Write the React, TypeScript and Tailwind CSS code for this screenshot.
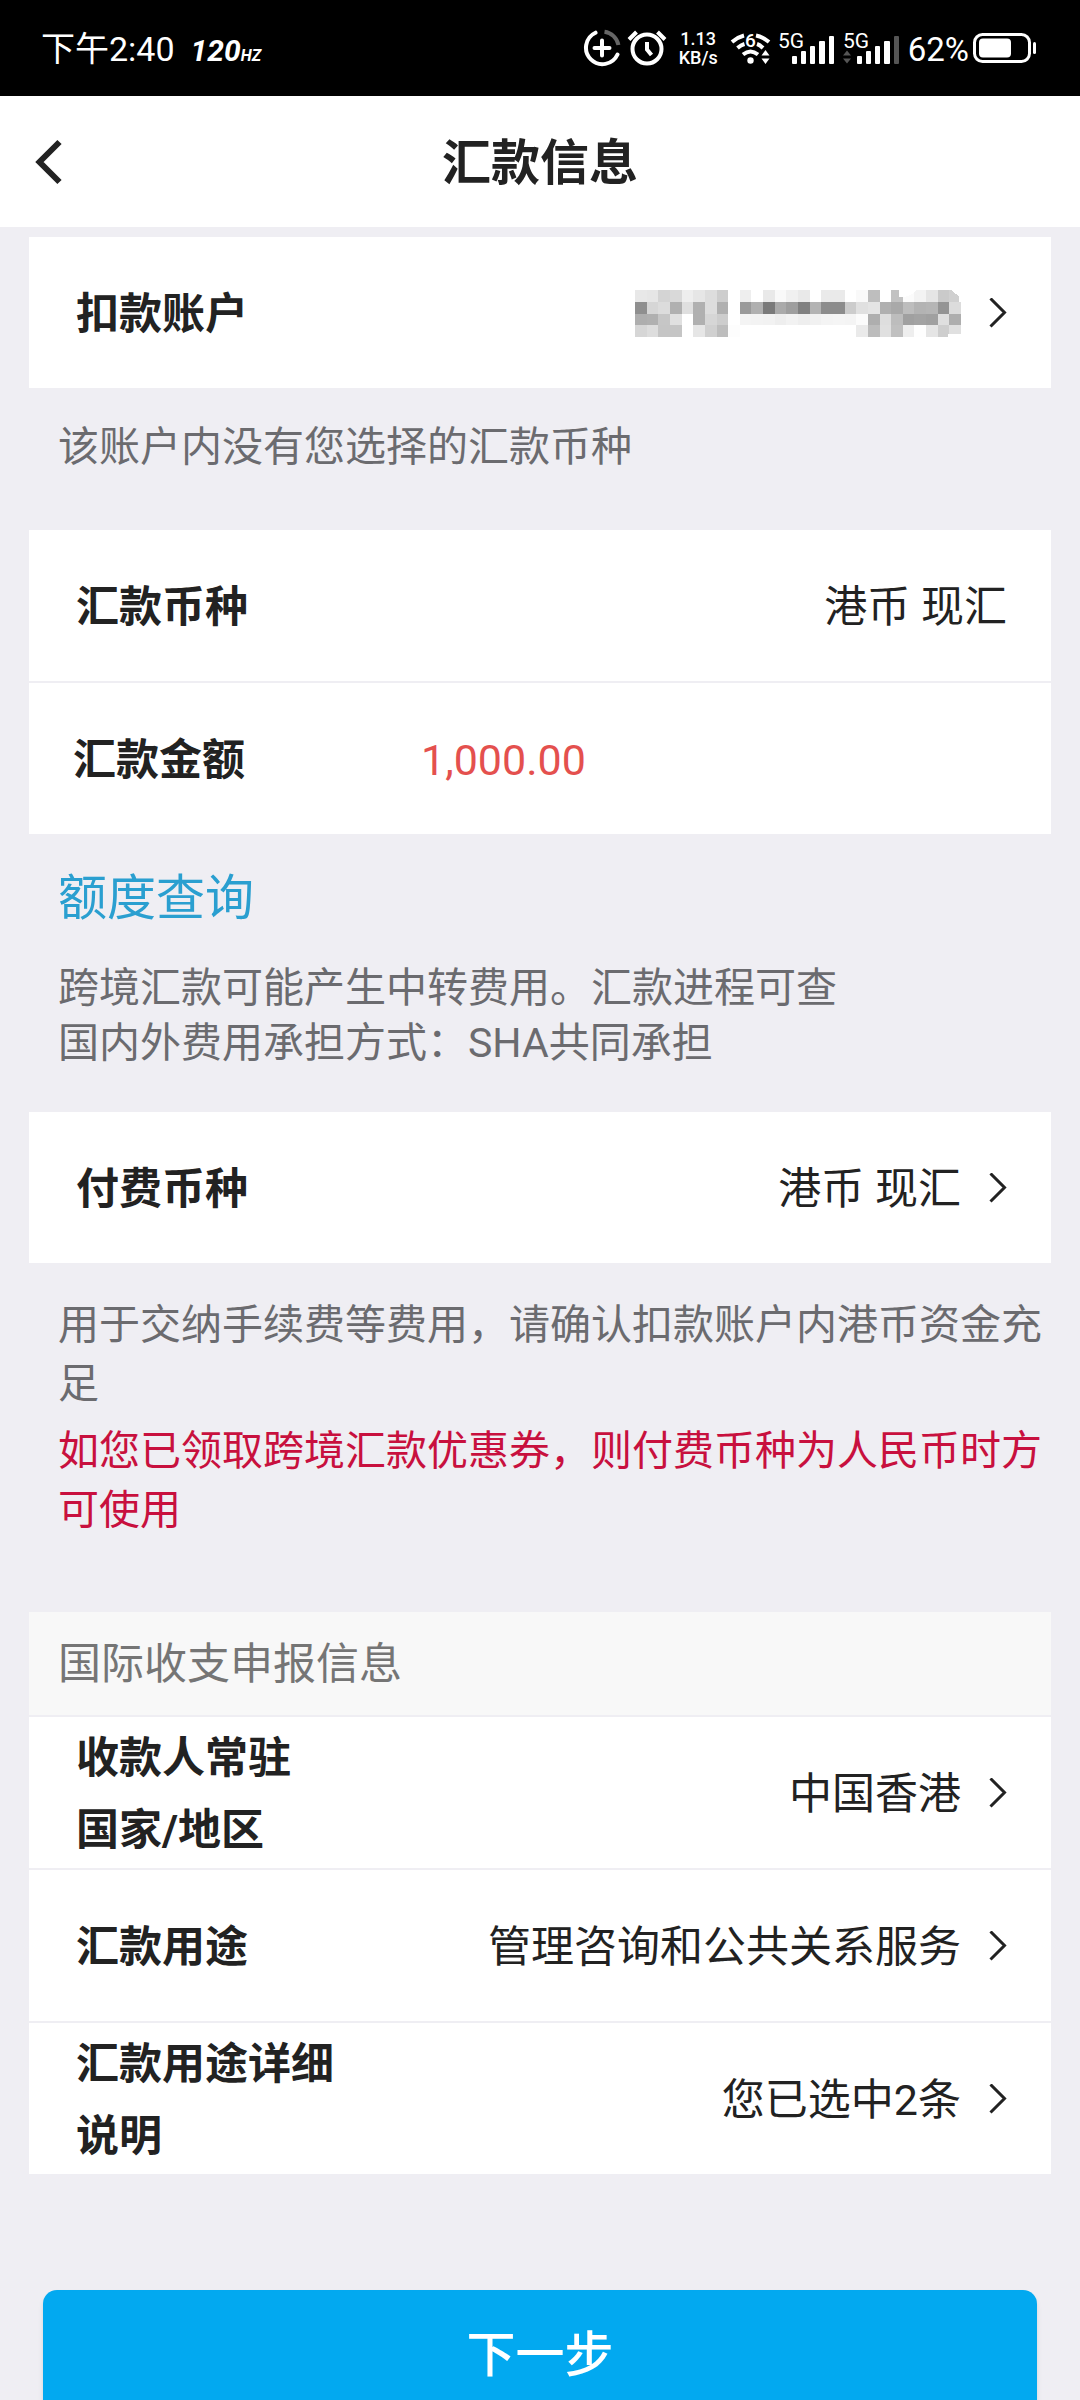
import React from "react";

type IRow = {
  label: string;
  value?: React.ReactNode;
  arrow?: boolean;
};

// grey levels of the masked account number, one line per pixel row
const MASK = [
  "e8 e6 d4 d9 ee e6 dd cd ff ee ff e9 f9 f0 e9 ff ea ea ff f9 be ff c2 fb f3 e5 ca d0",
  "8f d6 dc b0 df b0 dd b0 ff 9a b0 7a aa 9e 80 b3 8c 8c cc e0 e4 b0 a9 bd b3 b5 94 dc",
  "ae b0 c6 e0 ff b0 d6 cd ff f4 f3 f2 ee f2 ee f1 f4 f5 f4 fb ae de bd a0 a3 a0 df ae",
  "d6 dd c5 c5 ff e6 d0 bd fd ff ff ff ff ff ff ff ff ff ff ea bc e0 c0 ee fe e5 ce e0",
];

const MaskedAccount = () => (
  <svg width="326" height="47" viewBox="0 0 28 4" preserveAspectRatio="none" shapeRendering="crispEdges" role="img" aria-label="账户">
    {MASK.map((line, y) =>
      line.split(" ").map((c, x) => (
        <rect key={`${x}-${y}`} x={x} y={y} width="1" height="1" fill={`#${c}${c}${c}`} />
      ))
    )}
    <path d="M27.2 0H28V1H27.85V.6zM22.7 0H24.2L23.8 .35L23.2 .6L22.7 .6zM26.9 3.75H28V4H26.9z" fill="#fff" />
  </svg>
);

const Arrow = () => (
  <svg width="18" height="32" viewBox="0 0 18 32" fill="none" stroke="#222" strokeWidth="3" className="shrink-0">
    <path d="M1.5 0.500L15.5 14.500L1.5 28.500" />
  </svg>
);

const Signal = ({ weak }: { weak?: boolean }) => (
  <svg width="57" height="36" viewBox="0 0 57 36" fill="#fff">
    <text x="0" y="18" fontSize="21" fontFamily="Roboto, sans-serif">5G</text>
    {weak && <path d="M0 25.500L4 20.500L8 25.500zM0 28.500L4 33.500L8 28.500z" fill="#555" />}
    <rect x="14" y="26" width="5" height="8" rx="1" />
    <rect x="23" y="21" width="5" height="13" rx="1" />
    <rect x="32" y="16" width="5" height="18" rx="1" />
    <rect x="41" y="11" width="6" height="23" rx="1" />
    <rect x="51" y="6" width="5" height="28" rx="1" fill={weak ? "#555" : "#fff"} />
  </svg>
);

const StatusBar = () => (
  <div className="flex h-[96px] shrink-0 items-center justify-between bg-black pr-[43px] pl-[41px] text-white">
    <div className="flex items-baseline gap-4 pt-2">
      <span className="text-[34px] leading-[48px]">下午2:40</span>
      <span className="text-[30px] leading-[48px] font-bold italic">
        120<span className="text-[16px]">HZ</span>
      </span>
    </div>
    <div className="flex items-center">
      <svg width="38" height="38" viewBox="0 0 38 38" fill="none" stroke="#fff" strokeWidth="4" strokeLinecap="round">
        <path d="M12.500 3.700A16.500 16.500 0 1 0 34.500 25.500" />
        <path d="M21.500 2.700A16.500 16.500 0 0 1 35.400 16" stroke="#666" strokeLinecap="butt" />
        <path d="M19 11.500V26.500M11.500 19H26.500" />
      </svg>
      <svg width="40" height="38" viewBox="0 0 40 38" fill="none" stroke="#fff" strokeWidth="4" className="ml-[6px]">
        <circle cx="20" cy="20" r="14.500" />
        <path d="M2 10.500L9.500 3M38 10.500L30.500 3M20 13V20.500L24.500 26" />
      </svg>
      <div className="ml-3 flex flex-col text-center text-[18px] leading-[19px] font-medium">
        <span>1.13</span>
        <span>KB/s</span>
      </div>
      <svg width="42" height="36" viewBox="0 0 42 36" fill="none" stroke="#fff" strokeWidth="4" className="ml-3">
        <path d="M2 12Q8 7 14 5.500M26 5.500Q33 7 39 12M7.500 18Q11 15 14.500 14M27 14Q30 15 33 18M13 24.500Q20.500 18.500 28 24.500" />
        <circle cx="20.500" cy="30.500" r="3.200" fill="#fff" stroke="none" />
        <text x="15" y="17" fontSize="19" fill="#fff" stroke="none" fontFamily="Roboto, sans-serif" fontWeight="500">6</text>
        <path d="M31.500 25.500L35.500 20L39.500 25.500zM31.500 28.500L35.500 34L39.500 28.500z" fill="#fff" stroke="none" />
      </svg>
      <div className="ml-[6px] flex gap-2">
        <Signal />
        <Signal weak />
      </div>
      <span className="ml-2 pt-1 text-[33px] leading-[40px]">62%</span>
      <svg width="64" height="30" viewBox="0 0 64 30" fill="none" className="ml-1">
        <rect x="1.500" y="1.500" width="55" height="27" rx="8" stroke="#fff" strokeWidth="3" />
        <rect x="6" y="5.500" width="32" height="19" rx="4" fill="#fff" />
        <rect x="60" y="9" width="3" height="12" rx="1.500" fill="#fff" />
      </svg>
    </div>
  </div>
);

const Row: React.FC<IRow> = ({ label, value, arrow }) => {
  const content = (
    <>
      <span className="w-[270px] shrink-0 font-bold whitespace-pre-line">{label}</span>
      <span className="flex items-center gap-7">
        {value}
        {arrow && <Arrow />}
      </span>
    </>
  );
  const style = "flex min-h-[151px] w-full items-center justify-between bg-white pt-[2px] pr-11 pl-[47px] text-left text-[43px] leading-[72px]";

  if (arrow) return <button type="button" className={style}>{content}</button>;
  return <div className={style}>{content}</div>;
};

export default function App() {
  return (
    <div className="flex h-screen flex-col bg-[#efeef3] font-[Roboto,'Noto_Sans_CJK_SC',sans-serif] text-[#222]">
      <StatusBar />

      <header className="grid min-h-[131px] shrink-0 grid-cols-[1fr_auto_1fr] items-center bg-white px-[35px]">
        <button type="button" aria-label="返回" className="w-7">
          <svg width="28" height="46" viewBox="0 0 28 46" fill="none" stroke="#222" strokeWidth="6">
            <path d="M24.500 3L4.500 23L24.500 43" />
          </svg>
        </button>
        <h1 className="pt-1 text-[49px] leading-[72px] font-bold">汇款信息</h1>
      </header>

      <main className="flex-1 overflow-y-auto px-[29px] pt-[10px] [scrollbar-width:none]">
        <Row label="扣款账户" value={<MaskedAccount />} arrow />
        <p className="mt-[30px] pl-[29px] text-[41px] leading-[59px] text-[#6b6b6f]">该账户内没有您选择的汇款币种</p>

        <section className="mt-[53px] flex flex-col gap-0.5">
          <Row label="汇款币种" value="港币 现汇" />
          <div className="flex min-h-[151px] items-center bg-white pt-[2px] pr-11 pl-11 text-[43px] leading-[72px]">
            <label htmlFor="amount" className="w-[348px] shrink-0 font-bold">汇款金额</label>
            <input id="amount" type="text" inputMode="decimal" defaultValue="1,000.00" className="min-w-0 flex-1 text-[#e4504e] outline-none" />
          </div>
        </section>

        <div className="pl-[29px]">
          <a href="#quota" className="mt-[35px] block text-[49px] leading-[60px] text-[#2a9fd0]">额度查询</a>
          <p className="mt-8 text-[41px] leading-[55px] text-[#6b6b6f]">
            跨境汇款可能产生中转费用。汇款进程可查
            <br />
            国内外费用承担方式：SHA共同承担
          </p>
        </div>

        <section className="mt-[41px]">
          <Row label="付费币种" value="港币 现汇" arrow />
        </section>
        <div className="mt-[33px] -mr-5 pl-[29px] text-[41px] leading-[59px]">
          <p className="text-[#6b6b6f]">用于交纳手续费等费用，请确认扣款账户内港币资金充足</p>
          <p className="mt-2 text-[#c8103e]">如您已领取跨境汇款优惠券，则付费币种为人民币时方可使用</p>
        </div>

        <section className="mt-[72px] flex flex-col gap-0.5">
          <h2 className="bg-[#f8f8f8] pt-4 pb-[15px] pl-[29px] text-[43px] leading-[72px] text-[#757575]">国际收支申报信息</h2>
          <Row label={"收款人常驻\n国家/地区"} value="中国香港" arrow />
          <Row label="汇款用途" value="管理咨询和公共关系服务" arrow />
          <Row label="汇款用途详细说明" value="您已选中2条" arrow />
        </section>

        <div className="mt-[116px] px-[14px] pb-10">
          <button type="button" className="w-full rounded-[14px] bg-[#02a9f0] py-[30px] text-[49px] leading-[72px] font-medium text-white shadow-md">
            下一步
          </button>
        </div>
      </main>
    </div>
  );
}
